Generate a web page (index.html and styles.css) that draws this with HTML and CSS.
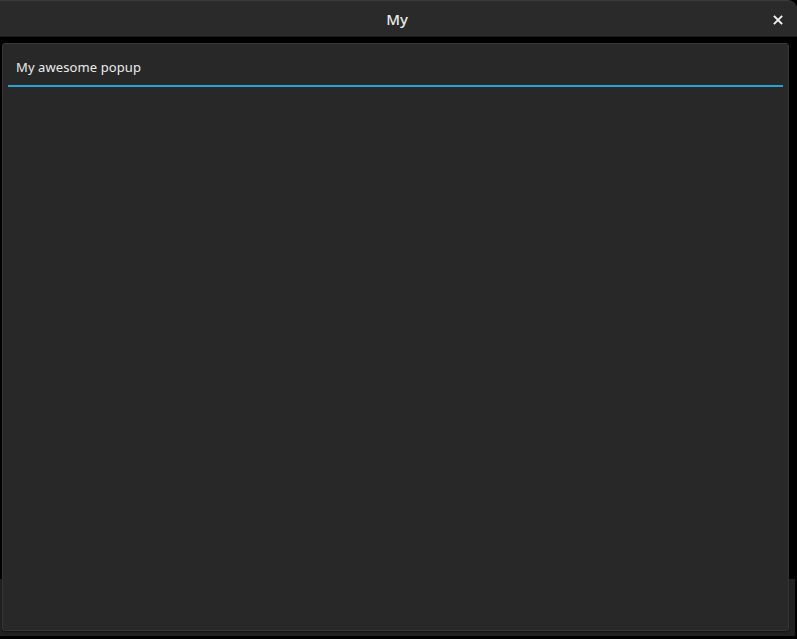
FILE: index.html
```html
<!DOCTYPE html>
<html>
<head>
<meta charset="utf-8">
<link rel="stylesheet" href="styles.css">
</head>
<body>
<div class="window">
  <header class="titlebar">
    <span class="title">My</span>
    <span class="close">
      <svg width="10" height="10" viewBox="0 0 10 10"><path d="M1.5 1.5 L8.5 8.5 M8.5 1.5 L1.5 8.5" stroke="#f2f2f2" stroke-width="1.8" stroke-linecap="square"/></svg>
    </span>
  </header>
  <main class="stage">
    <div class="backdrop"></div>
    <section class="panel">
      <div class="field">
        <span class="field-text">My awesome popup</span>
      </div>
    </section>
  </main>
</div>
</body>
</html>
```

FILE: styles.css
```css
html, body {
  margin: 0;
  padding: 0;
  background: #000;
  width: 797px;
  height: 639px;
  overflow: hidden;
  font-family: "Noto Sans", "DejaVu Sans", sans-serif;
}
.window {
  display: flex;
  flex-direction: column;
  height: 639px;
}
.titlebar {
  height: 37px;
  box-sizing: border-box;
  background: #2a2a2a;
  border-top: 1px solid #3b3b3b;
  border-bottom: 1px solid #1a1a1a;
  border-top-right-radius: 9px;
  display: flex;
  align-items: center;
  justify-content: center;
  position: relative;
  flex: none;
}
.title {
  color: #ececec;
  font-size: 15px;
  font-weight: 500;
  margin-left: -3px;
  margin-top: 1px;
}
.close {
  position: absolute;
  right: 14px;
  top: 14px;
  width: 10px;
  height: 10px;
  display: flex;
}
.stage {
  flex: 1;
  position: relative;
  padding: 6px 8px 8px 2px;
}
.backdrop {
  position: absolute;
  left: 0;
  right: 2px;
  top: 542px;
  height: 57px;
  background: #222222;
}
.panel {
  position: relative;
  height: 588px;
  box-sizing: border-box;
  background: #282828;
  border: 1px solid #353535;
  border-radius: 3px;
  box-shadow: 0 1px 2px rgba(0,0,0,0.5);
  padding: 9px 5px 0 5px;
}
.field {
  height: 34px;
  box-sizing: border-box;
  border-bottom: 2px solid #2ba0d3;
  padding: 2px 0 0 8px;
}
.field-text {
  color: #ececec;
  font-size: 13px;
  letter-spacing: 0.1px;
}
```
